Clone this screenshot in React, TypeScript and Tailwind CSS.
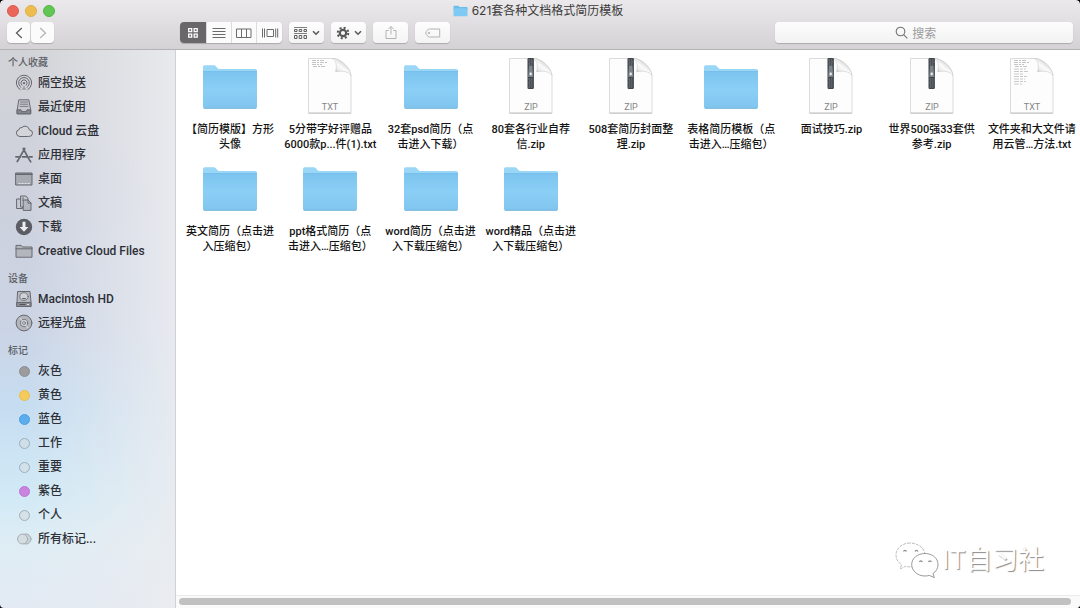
import React, { useId, useState } from "react";

type FileKind = "folder" | "txt" | "txtLong" | "zip";

interface FileItem {
    kind: FileKind;
    lines: string[];
}

const files: FileItem[] = [
    { kind: "folder", lines: ["【简历模版】方形", "头像"] },
    { kind: "txt", lines: ["5分带字好评赠品", "6000款p...件(1).txt"] },
    { kind: "folder", lines: ["32套psd简历（点", "击进入下载）"] },
    { kind: "zip", lines: ["80套各行业自荐", "信.zip"] },
    { kind: "zip", lines: ["508套简历封面整", "理.zip"] },
    { kind: "folder", lines: ["表格简历模板（点", "击进入…压缩包）"] },
    { kind: "zip", lines: ["面试技巧.zip"] },
    { kind: "zip", lines: ["世界500强33套供", "参考.zip"] },
    { kind: "txtLong", lines: ["文件夹和大文件请", "用云管…方法.txt"] },
    { kind: "folder", lines: ["英文简历（点击进", "入压缩包）"] },
    { kind: "folder", lines: ["ppt格式简历（点", "击进入…压缩包）"] },
    { kind: "folder", lines: ["word简历（点击进", "入下载压缩包）"] },
    { kind: "folder", lines: ["word精品（点击进", "入下载压缩包）"] },
];

const SideIcon = ({ children }: { children: React.ReactNode }) => (
    <svg
        viewBox="0 0 18 18"
        className="size-[18px] shrink-0"
        fill="none"
        stroke="#66686f"
        strokeWidth="1"
        strokeLinecap="round"
        strokeLinejoin="round"
    >
        {children}
    </svg>
);

const AirDropIcon = () => (
    <SideIcon>
        <path d="M5.2 15.6a7.7 7.7 0 1 1 7.6 0" />
        <path d="M6 13.4a5.4 5.4 0 1 1 6 0" />
        <path d="M6.9 11.3a3.1 3.1 0 1 1 4.2 0" />
        <circle cx="9" cy="9.2" r="1.1" fill="#66686f" stroke="none" />
        <path d="M9 11.5l-2.2 4.3h4.4z" fill="#9a9ca3" stroke="none" />
    </SideIcon>
);

const RecentsIcon = () => (
    <SideIcon>
        <path d="M4.2 1.8h9.6l1.9 10v4H2.3v-4z" fill="#c6c8cf" />
        <path d="M5.4 4h7.2M5.2 6.2h7.6M5 8.400h8" strokeWidth="0.8" />
        <path d="M2.3 11.8h3.6l1 1.8h4.2l1-1.8h3.6v4H2.3z" fill="#85878e" />
    </SideIcon>
);

const CloudIcon = () => (
    <SideIcon>
        <path
            d="M4.6 14.5a3.5 3.5 0 0 1-.5-6.9 2.5 2.5 0 0 1 2.8-2.1 4.4 4.4 0 0 1 7.5 2.4 3.3 3.3 0 0 1-.4 6.6z"
            fill="#d3d5da"
        />
    </SideIcon>
);

const AppsIcon = () => (
    <SideIcon>
        <path d="M8.2 2.5l5.9 10.9 1.6 2.4M9.8 2.5L3.7 13.2l-1.5 2.3" strokeWidth="1.7" />
        <path d="M.9 10.8h4.6M7.6 10.8h4.2M14.2 10.8h2.9" strokeWidth="1.7" />
    </SideIcon>
);

const DesktopIcon = () => (
    <SideIcon>
        <path d="M1 3h16v12H1z" fill="#a9abb3" />
        <path d="M1 4.2h16" strokeWidth="1.4" />
        <path d="M4 13.6h1.2M7 13.6h1.2M10 13.6h1.2M13 13.6h1.2" stroke="#f0f1f4" />
    </SideIcon>
);

const DocsIcon = () => (
    <SideIcon>
        <path d="M2 5h5.5v9.500H2z" fill="#c6c8cf" />
        <path d="M6 2h4.800l2 2.200V13H6z" fill="#c6c8cf" />
        <path d="M8.600 6h4.600l2.800 3v7.400H8.600z" fill="#b4b6be" />
        <path d="M13 6v3.200h3M8 3.600v3" />
    </SideIcon>
);

const DownloadIcon = () => (
    <SideIcon>
        <circle cx="9" cy="9" r="8.2" fill="#5b5d64" stroke="none" />
        <path d="M9 3.8v5.4" stroke="#eceef2" strokeWidth="3" strokeLinecap="butt" />
        <path d="M4.600 9h8.800L9 13.800z" fill="#eceef2" stroke="none" />
    </SideIcon>
);

const SideFolderIcon = () => (
    <SideIcon>
        <path d="M1 14.8V3.4h5.2l1.4 1.6H17v9.8z" fill="#b4b6be" />
        <path d="M1 6.8h16" />
    </SideIcon>
);

const DiskIcon = () => (
    <SideIcon>
        <path d="M3 1.500h12l1 10.500v4.500H2V12z" fill="#b7b9c0" />
        <path d="M2 12.500h14v4H2z" fill="#8b8d94" />
        <ellipse cx="9" cy="6.600" rx="4.200" ry="3.900" fill="#d0d2d8" strokeWidth="0.800" />
        <path d="M7.600 8.600h2.800M5 14.500h5" stroke="#50525a" />
        <path d="M12.500 14.500h1" stroke="#eceef2" />
    </SideIcon>
);

const DiscIcon = () => (
    <SideIcon>
        <circle cx="9" cy="9" r="7.9" fill="#b4b6be" />
        <circle cx="9" cy="9" r="3.7" fill="#cdcfd6" strokeWidth="0.8" />
        <circle cx="9" cy="9" r="1.4" fill="#eceef2" strokeWidth="0.8" />
        <path d="M5 4.2l2 2.4M13 13.8l-2-2.4" stroke="#dfe1e6" />
    </SideIcon>
);

const TagDot = ({ color }: { color: string }) => (
    <span className="w-[18px] shrink-0 flex justify-center">
        <span className={`size-[11px] rounded-full border ${color}`} />
    </span>
);

const AllTagsIcon = () => (
    <SideIcon>
        <circle cx="11" cy="9" r="5" fill="#ccd3d9" stroke="#a5adb4" />
        <circle cx="7.6" cy="9" r="5" fill="#d6dde2" stroke="#a5adb4" />
    </SideIcon>
);

const sections = [
    {
        title: "个人收藏",
        items: [
            { label: "隔空投送", icon: <AirDropIcon /> },
            { label: "最近使用", icon: <RecentsIcon /> },
            { label: "iCloud 云盘", icon: <CloudIcon /> },
            { label: "应用程序", icon: <AppsIcon /> },
            { label: "桌面", icon: <DesktopIcon /> },
            { label: "文稿", icon: <DocsIcon /> },
            { label: "下载", icon: <DownloadIcon /> },
            { label: "Creative Cloud Files", icon: <SideFolderIcon /> },
        ],
    },
    {
        title: "设备",
        items: [
            { label: "Macintosh HD", icon: <DiskIcon /> },
            { label: "远程光盘", icon: <DiscIcon /> },
        ],
    },
    {
        title: "标记",
        items: [
            { label: "灰色", icon: <TagDot color="bg-[#9c9b9e] border-[#8f8e91]" /> },
            { label: "黄色", icon: <TagDot color="bg-[#f5cb5b] border-[#ecbe48]" /> },
            { label: "蓝色", icon: <TagDot color="bg-[#5badee] border-[#4a9fe4]" /> },
            { label: "工作", icon: <TagDot color="bg-[#cfdfe9] border-[#9fafba]" /> },
            { label: "重要", icon: <TagDot color="bg-[#d2e2ea] border-[#9fafb9]" /> },
            { label: "紫色", icon: <TagDot color="bg-[#c984e0] border-[#bd74d6]" /> },
            { label: "个人", icon: <TagDot color="bg-[#d4e2e7] border-[#a2b0b6]" /> },
            { label: "所有标记...", icon: <AllTagsIcon /> },
        ],
    },
];

const FolderArt = () => {
    const id = useId();
    return (
        <svg viewBox="0 0 64 64" className="size-16">
            <defs>
                <linearGradient id={id} x1="0" y1="0" x2="0" y2="1">
                    <stop offset="0" stopColor="#7cc4ef" />
                    <stop offset="0.5" stopColor="#8bcff6" />
                    <stop offset="1" stopColor="#80c5ef" />
                </linearGradient>
            </defs>
            <path
                d="M5 17v-4a1.8 1.8 0 0 1 1.8-1.8h8.500c1.600 0 2.300.5 3.200 1.800s1.600 2 3.200 2h35.500A1.800 1.800 0 0 1 59 16.800v4H5z"
                fill="#9ad6f5"
            />
            <path d="M5 17.500h54v35.300a1.700 1.700 0 0 1-1.700 1.700H6.700A1.700 1.700 0 0 1 5 52.800z" fill={`url(#${id})`} />
            <path d="M5 17.500h54" stroke="#74bce8" strokeWidth="0.800" />
            <path d="M5.600 54.300h52.800" stroke="#69afd8" strokeWidth="0.800" />
        </svg>
    );
};

const DocumentArt = ({ kind }: { kind: FileKind }) => {
    const id = useId();
    const zip = kind === "zip";
    return (
        <svg viewBox="0 0 64 64" className="size-16">
            <defs>
                <linearGradient id={id} x1="0.100" y1="0.900" x2="0.700" y2="0.200">
                    <stop offset="0" stopColor="#a8a8a8" />
                    <stop offset="0.350" stopColor="#ececec" />
                    <stop offset="0.600" stopColor="#fbfbfb" />
                    <stop offset="1" stopColor="#cfcfcf" />
                </linearGradient>
            </defs>
            <path
                d="M10.500 4.500h26c7 1.500 15.500 9 16.500 17v37.500h-42.500z"
                fill="#fdfdfd"
                stroke="#d2d2d2"
                strokeWidth="0.800"
            />
            <path d="M10.500 59.200H53" stroke="#b9b9b9" strokeWidth="0.800" />
            {kind !== "zip" && (
                <path
                    d="M14 6.500h12M14 8.500h15M14 10.500h10M15 12.500h12"
                    stroke="#b5b5b5"
                    strokeWidth="0.800"
                    strokeDasharray="4 1 2 1"
                />
            )}
            {kind === "txtLong" && (
                <path
                    d="M14 15h12M14 17.500h14M14 20h9M14 22.500h13M14 25h11M14 27.500h12M14 30h8"
                    stroke="#bdbdbd"
                    strokeWidth="0.800"
                    strokeDasharray="5 1 3 1"
                />
            )}
            <path
                d="M34 4.500c4.600 2.200 5 7 3.600 13.300 5.500-1.200 12.600-.8 15.400 3.700-1-8-9.500-15.500-16.500-17z"
                fill={`url(#${id})`}
                stroke="#c4c4c4"
                strokeWidth="0.500"
            />
            {zip && (
                <g>
                    <rect x="28.500" y="4" width="6.400" height="31" rx="1.200" fill="#41464c" />
                    <path
                        d="M29.500 6h4M30 8h4M29.500 10h4M29.500 25h4M30 27h3.500M29.500 29h4M30 31h3.500M29.500 33h4"
                        stroke="#9da2a6"
                        strokeWidth="0.700"
                        strokeDasharray="1.500 0.800"
                    />
                    <path d="M30 11.500h3.400l.8 11.500h-5z" fill="#7d858c" />
                    <rect x="30.600" y="18.500" width="2.200" height="2.800" rx="0.600" fill="#e9eaeb" />
                </g>
            )}
            <text x="32" y="56" textAnchor="middle" className="text-[9px] fill-[#858585]">
                {zip ? "ZIP" : "TXT"}
            </text>
        </svg>
    );
};

const Chevron = () => (
    <svg viewBox="0 0 8 6" className="w-2 h-1.5" fill="none" stroke="#5a5a5a" strokeWidth="1.600">
        <path d="M1 1.200l3 3 3-3" />
    </svg>
);

const toolButton =
    "h-[21px] w-[35px] rounded bg-gradient-to-b from-[#fefefe] to-[#f4f3f4] shadow-[0_1px_1px_rgba(0,0,0,0.2)] flex items-center justify-center gap-1";

const viewModes = [
    {
        name: "图标",
        art: <path d="M4.700 3.700h3v3h-3zM10.200 3.700h3v3h-3zM4.700 9.200h3v3h-3zM10.200 9.200h3v3h-3z" strokeWidth="1.300" />,
    },
    { name: "列表", art: <path d="M2.500 3.500h13M2.500 6.500h13M2.500 9.500h13M2.500 12.500h13" /> },
    { name: "分栏", art: <path d="M1.500 4h14.500v8.500H1.500zM6.500 4v8.500M11.500 4v8.500" /> },
    { name: "封面流", art: <path d="M1.500 3.500v9M3.500 3.500v9M6 4.500h6.500v7H6zM14.700 3.500v9M16.700 3.500v9" /> },
];

const Toolbar = () => {
    const [view, setView] = useState(0);

    return (
        <header className="bg-gradient-to-b from-[#ebe9eb] to-[#d4d2d4] border-b border-[#b4b2b4] rounded-t">
            <div className="grid grid-cols-[1fr_auto_1fr] h-[21px] px-[7px] items-center">
                <div className="flex gap-1.5">
                    <button aria-label="关闭" className="size-3 rounded-full bg-[#ec6559] border border-[#dd5b50]" />
                    <button aria-label="最小化" className="size-3 rounded-full bg-[#edbd4f] border border-[#deb04a]" />
                    <button aria-label="缩放" className="size-3 rounded-full bg-[#61c654] border border-[#55b54a]" />
                </div>
                <h1 className="flex items-center gap-1 pr-1 text-xs text-[#3b3a3b]">
                    <svg viewBox="0 0 15 12" className="w-[15px] h-3">
                        <path d="M.5 1.500A.8.800 0 0 1 1.300.7h4l1.200 1.200h7.200a.8.800 0 0 1 .8.800v2H.5z" fill="#6dbde8" />
                        <path d="M.5 3.200h14v7.500a.6.600 0 0 1-.6.600H1.100a.6.600 0 0 1-.6-.6z" fill="#7fcaf3" />
                    </svg>
                    621套各种文档格式简历模板
                </h1>
            </div>
            <div className="flex items-center mt-px pb-1.5 px-[7px]">
                <div className="flex gap-px w-[173px] shrink-0">
                    <button aria-label="后退" className="h-[21px] w-[23px] rounded bg-[#fbfbfb] shadow-[0_1px_1px_rgba(0,0,0,0.2)] flex items-center justify-center">
                        <svg viewBox="0 0 8 12" className="w-2 h-3" fill="none" stroke="#5c5c5c" strokeWidth="1.300">
                            <path d="M6.800 1L1.500 6l5.300 5" />
                        </svg>
                    </button>
                    <button aria-label="前进" className="h-[21px] w-[23px] rounded bg-[#fbfbfb] shadow-[0_1px_1px_rgba(0,0,0,0.2)] flex items-center justify-center">
                        <svg viewBox="0 0 8 12" className="w-2 h-3" fill="none" stroke="#b5b5b5" strokeWidth="1.300">
                            <path d="M1.200 1l5.300 5-5.300 5" />
                        </svg>
                    </button>
                </div>
                <div className="flex gap-[7px] shrink-0">
                    <div className="flex rounded overflow-hidden bg-[#fbfbfb] shadow-[0_1px_1px_rgba(0,0,0,0.2)] divide-x divide-[#dddcdd]">
                        {viewModes.map((mode, index) => (
                            <button
                                key={mode.name}
                                aria-label={mode.name}
                                onClick={() => setView(index)}
                                className={`h-[21px] flex items-center justify-center ${
                                    view === index ? "w-[27px] bg-[#696769]" : "w-[25px]"
                                }`}
                            >
                                <svg
                                    viewBox="0 0 18 16"
                                    className="w-[18px] h-4"
                                    fill="none"
                                    stroke={view === index ? "#ffffff" : "#6b6b6b"}
                                    strokeWidth="1"
                                >
                                    {mode.art}
                                </svg>
                            </button>
                        ))}
                    </div>
                    <button aria-label="排列方式" className={toolButton}>
                        <svg viewBox="0 0 15 14" className="w-[15px] h-3.5" fill="none" stroke="#5f5f5f" strokeWidth="1">
                            <path d="M1 1.500h13M1 7.500h13" strokeWidth="0.800" />
                            <path d="M1.500 3.500h2.500v2H1.500zM6.200 3.500h2.500v2H6.200zM11 3.500h2.500v2H11zM1.500 9.500h2.500v3H1.500zM6.200 9.500h2.500v3H6.200zM11 9.500h2.500v3H11z" />
                        </svg>
                        <Chevron />
                    </button>
                    <button aria-label="操作" className={toolButton}>
                        <svg viewBox="0 0 14 14" className="size-3.5" fill="none" stroke="#585858">
                            <circle cx="7" cy="7" r="3.200" strokeWidth="2.200" />
                            <circle cx="7" cy="7" r="5.300" strokeWidth="2" strokeDasharray="2.080 2.080" />
                        </svg>
                        <Chevron />
                    </button>
                    <button aria-label="共享" className={toolButton}>
                        <svg viewBox="0 0 12 15" className="w-3 h-[15px]" fill="none" stroke="#b3b3b3" strokeWidth="1">
                            <path d="M3.800 5.500H1v8h10v-8H8.200M6 9.500V1.500M3.500 4L6 1.500 8.500 4" />
                        </svg>
                    </button>
                    <button aria-label="标记" className={toolButton}>
                        <svg viewBox="0 0 16 10" className="w-4 h-2.5" fill="none" stroke="#b3b3b3" strokeWidth="1">
                            <path d="M4.500 1h10.200v8H4.500C3 9 .8 6.500.8 5S3 1 4.500 1z" />
                            <circle cx="4" cy="5" r="0.800" />
                        </svg>
                    </button>
                </div>
                <label className="ml-auto w-[28%] h-[21px] rounded bg-gradient-to-b from-[#fdfdfd] to-[#f3f2f3] shadow-[0_1px_1px_rgba(0,0,0,0.2)] flex items-center justify-center gap-1">
                    <svg viewBox="0 0 13 13" className="size-[13px] -ml-4" fill="none" stroke="#737373" strokeWidth="1.100">
                        <circle cx="5.500" cy="5.500" r="4.300" />
                        <path d="M8.600 8.600l3.700 3.700" />
                    </svg>
                    <input
                        type="search"
                        aria-label="搜索"
                        placeholder="搜索"
                        className="field-sizing-content bg-transparent text-xs outline-none placeholder:text-[#9b9b9b]"
                    />
                </label>
            </div>
        </header>
    );
};

const Sidebar = () => (
    <nav className="w-[176px] shrink-0 border-r border-[#cfd1d6] pt-[5px] font-['Roboto','Noto_Sans_CJK_SC',sans-serif] bg-[linear-gradient(to_right,transparent_15%,rgba(234,236,240,0.9)),linear-gradient(#d2d3d7,#cdd1dd_27%,#cbd4e5_50%,#c6ddf1_64%,#d1eaf6_80%,#deedf5_88%,#e3eaf3)]">
        {sections.map((section) => (
            <section key={section.title} className="mb-2">
                <h2 className="pl-2 h-4 leading-4 text-[10px] font-medium text-[#5c5e66]">{section.title}</h2>
                <ul>
                    {section.items.map((item) => (
                        <li key={item.label}>
                            <a href="#" className="flex items-center gap-[5px] h-6 pl-[15px] text-xs font-medium text-[#2e3037]">
                                {item.icon}
                                {item.label}
                            </a>
                        </li>
                    ))}
                </ul>
            </section>
        ))}
    </nav>
);

const FileTile = ({ file }: { file: FileItem }) => (
    <li className="h-[102px]">
        <button className="w-full flex flex-col items-center">
            {file.kind === "folder" ? <FolderArt /> : <DocumentArt kind={file.kind} />}
            <span className="mt-1 text-[11px] leading-[15px] font-medium text-[#141414] whitespace-nowrap">
                {file.lines.map((line) => (
                    <span key={line} className="block">
                        {line}
                    </span>
                ))}
            </span>
        </button>
    </li>
);

const Watermark = () => (
    <div className="absolute right-9 bottom-[30px] flex items-center gap-[3px] pointer-events-none">
        <svg viewBox="0 0 44 36" className="w-11 h-9" fill="#ffffff" stroke="#8d8d8d" strokeWidth="0.900">
            <path d="M15 1C7 1 1 6.500 1 13c0 4 2 7.300 5.500 9.500L5.300 27l5.200-2.700c1.500.4 3 .6 4.500.6 8 0 15-5.200 15-11.900S23 1 15 1z" strokeDasharray="3 1" stroke="#b5b5b5" />
            <path d="M30 11.500c-7.500 0-13.300 4.800-13.300 11S22.500 34 30 34c1.500 0 3-.2 4.300-.6l5 2.200-1.300-4c3-2 5-5.200 5-9 0-6.300-5.500-11.100-13-11.100z" />
            <path d="M8.500 9.500c.6-1.600 2.400-1.600 3 0M20 9.500c.6-1.600 2.400-1.600 3 0M24.500 20c.5-1.500 2.300-1.500 2.800 0M33.500 20c.5-1.500 2.300-1.500 2.800 0" fill="none" strokeWidth="1.300" />
        </svg>
        <span className="text-[26px] leading-9 text-white [text-shadow:1px_1px_1px_#8a8a8a]">IT自习社</span>
    </div>
);

const App = () => {
    return (
        <div className="bg-black font-['Inter','Noto_Sans_CJK_SC',sans-serif]">
            <div className="min-h-screen flex flex-col overflow-hidden rounded">
                <Toolbar />
                <div className="flex flex-1">
                    <Sidebar />
                    <main className="relative flex-1 min-w-0 flex flex-col bg-white">
                        <ul className="flex-1 grid grid-cols-[repeat(auto-fill,minmax(100px,1fr))] content-start pt-1 pl-1 -mr-0.5 font-['Roboto','Noto_Sans_CJK_SC',sans-serif]">
                            {files.map((file) => (
                                <FileTile key={file.lines.join("")} file={file} />
                            ))}
                        </ul>
                        <Watermark />
                        <div className="h-[13px] border-t border-[#ebebeb] bg-[#fafafa] pt-0.5 pl-[3px] pr-[9px]">
                            <div className="h-[7px] rounded-full bg-[#c1c1c1]" />
                        </div>
                    </main>
                </div>
            </div>
        </div>
    );
};

export default App;
